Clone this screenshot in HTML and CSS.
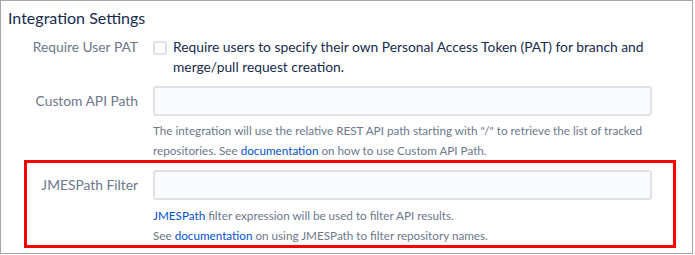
FILE: index.html
```html
<!DOCTYPE html>
<html lang="en">
<head>
    <meta charset="UTF-8">
    <title>Integration Settings</title>
    <link rel="stylesheet" href="styles.css">
</head>
<body>
    <div class="panel">
        <h2 class="panel-title">Integration Settings</h2>

        <div class="field-row">
            <div class="field-label">Require User PAT</div>
            <div class="field-body">
                <label class="check">
                    <span class="checkbox"></span>
                    <span>Require users to specify their own Personal Access Token (PAT) for branch and<br>merge/pull request creation.</span>
                </label>
            </div>
        </div>

        <div class="field-row">
            <div class="field-label field-label-input">Custom API Path</div>
            <div class="field-body">
                <div class="text-input"></div>
                <div class="description">
                    The integration will use the relative REST API path starting with "/" to retrieve the list of tracked<br>
                    repositories. See <a href="#">documentation</a> on how to use Custom API Path.
                </div>
            </div>
        </div>

        <!-- highlighted row -->
        <div class="highlight">
            <div class="field-row field-row-inner">
                <div class="field-label field-label-input">JMESPath Filter</div>
                <div class="field-body">
                    <div class="text-input"></div>
                    <div class="description">
                        <a href="#">JMESPath</a> filter expression will be used to filter API results.<br>
                        See <a href="#">documentation</a> on using JMESPath to filter repository names.
                    </div>
                </div>
            </div>
        </div>
    </div>
</body>
</html>
```

FILE: styles.css
```css
body {
    margin: 0;
    background: #fff;
    font-family: Lato, "Noto Sans", sans-serif;
}
.panel {
    width: 693px;
    height: 254px;
    box-sizing: border-box;
    border: 1px solid #a6a6a6;
    background: #fff;
}
.panel-title {
    margin: 0;
    padding: 7px 0 0 7px;
    font-size: 16px;
    line-height: 20px;
    font-weight: 400;
    color: #172b4d;
}
.field-row {
    display: grid;
    grid-template-columns: 137px 499px;
    column-gap: 15px;
    margin-top: 9px;
}
.field-row-inner {
    grid-template-columns: 111px 499px;
    margin-top: 0;
}
.field-label {
    text-align: right;
    font-size: 13.8px;
    line-height: 20px;
    color: #6b778c;
}
.field-label-input {
    line-height: 30px;
}
.check {
    display: flex;
    align-items: flex-start;
    gap: 6px;
    font-size: 13.8px;
    line-height: 20px;
    color: #172b4d;
    white-space: nowrap;
}
.checkbox {
    flex: none;
    width: 14px;
    height: 14px;
    margin-top: 4px;
    box-sizing: border-box;
    border: 2px solid #dfe1e6;
    border-radius: 3px;
    background: #fafbfc;
}
.text-input {
    height: 30px;
    box-sizing: border-box;
    border: 2px solid #dfe1e6;
    border-radius: 3px;
    background: #fafbfc;
}
.description {
    margin-top: 4px;
    font-size: 11.7px;
    line-height: 20px;
    color: #6b778c;
    white-space: nowrap;
}
.highlight .description {
    margin-top: 5px;
}
.description a {
    color: #0052cc;
    text-decoration: none;
}
.highlight {
    width: 652px;
    box-sizing: border-box;
    margin-left: 23px;
    padding-top: 7px;
    border: 3px solid #ff0000;
}
```
